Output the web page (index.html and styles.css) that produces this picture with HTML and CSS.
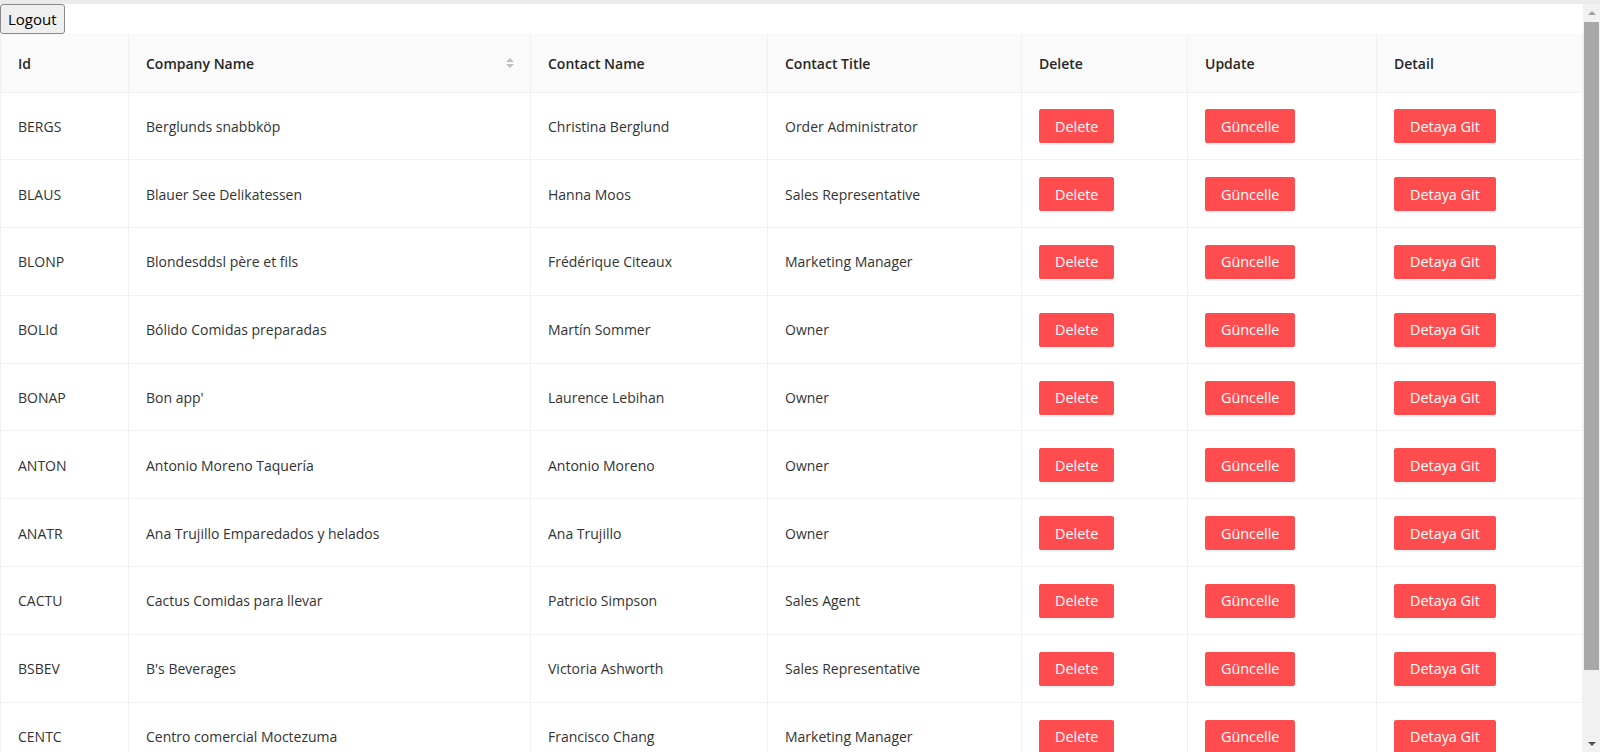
FILE: index.html
```html
<!DOCTYPE html>
<html>
<head>
<meta charset="utf-8">
<title>Customers</title>
<link rel="stylesheet" href="styles.css">
</head>
<body>
<div class="frame">
  <div class="viewport">
    <button class="logout">Logout</button>
    <table class="grid">
      <colgroup>
        <col class="c-id"><col class="c-company"><col class="c-contact"><col class="c-title"><col class="c-del"><col class="c-upd"><col class="c-det">
      </colgroup>
      <thead>
        <tr>
          <th>Id</th>
          <th><div class="sortable"><span>Company Name</span><span class="sorter"><i class="up"></i><i class="down"></i></span></div></th>
          <th>Contact Name</th>
          <th>Contact Title</th>
          <th>Delete</th>
          <th>Update</th>
          <th>Detail</th>
        </tr>
      </thead>
      <tbody>
        <tr><td>BERGS</td><td>Berglunds snabbköp</td><td>Christina Berglund</td><td>Order Administrator</td><td><button class="btn">Delete</button></td><td><button class="btn">Güncelle</button></td><td><button class="btn">Detaya Git</button></td></tr>
        <tr><td>BLAUS</td><td>Blauer See Delikatessen</td><td>Hanna Moos</td><td>Sales Representative</td><td><button class="btn">Delete</button></td><td><button class="btn">Güncelle</button></td><td><button class="btn">Detaya Git</button></td></tr>
        <tr><td>BLONP</td><td>Blondesddsl père et fils</td><td>Frédérique Citeaux</td><td>Marketing Manager</td><td><button class="btn">Delete</button></td><td><button class="btn">Güncelle</button></td><td><button class="btn">Detaya Git</button></td></tr>
        <tr><td>BOLId</td><td>Bólido Comidas preparadas</td><td>Martín Sommer</td><td>Owner</td><td><button class="btn">Delete</button></td><td><button class="btn">Güncelle</button></td><td><button class="btn">Detaya Git</button></td></tr>
        <tr><td>BONAP</td><td>Bon app'</td><td>Laurence Lebihan</td><td>Owner</td><td><button class="btn">Delete</button></td><td><button class="btn">Güncelle</button></td><td><button class="btn">Detaya Git</button></td></tr>
        <tr><td>ANTON</td><td>Antonio Moreno Taquería</td><td>Antonio Moreno</td><td>Owner</td><td><button class="btn">Delete</button></td><td><button class="btn">Güncelle</button></td><td><button class="btn">Detaya Git</button></td></tr>
        <tr><td>ANATR</td><td>Ana Trujillo Emparedados y helados</td><td>Ana Trujillo</td><td>Owner</td><td><button class="btn">Delete</button></td><td><button class="btn">Güncelle</button></td><td><button class="btn">Detaya Git</button></td></tr>
        <tr><td>CACTU</td><td>Cactus Comidas para llevar</td><td>Patricio Simpson</td><td>Sales Agent</td><td><button class="btn">Delete</button></td><td><button class="btn">Güncelle</button></td><td><button class="btn">Detaya Git</button></td></tr>
        <tr><td>BSBEV</td><td>B's Beverages</td><td>Victoria Ashworth</td><td>Sales Representative</td><td><button class="btn">Delete</button></td><td><button class="btn">Güncelle</button></td><td><button class="btn">Detaya Git</button></td></tr>
        <tr><td>CENTC</td><td>Centro comercial Moctezuma</td><td>Francisco Chang</td><td>Marketing Manager</td><td><button class="btn">Delete</button></td><td><button class="btn">Güncelle</button></td><td><button class="btn">Detaya Git</button></td></tr>
      </tbody>
    </table>
  </div>
  <div class="scrollbar">
    <div class="sb-btn"><i class="sb-up"></i></div>
    <div class="sb-track"><div class="sb-thumb"></div></div>
    <div class="sb-btn"><i class="sb-down"></i></div>
  </div>
</div>
</body>
</html>
```

FILE: styles.css
```css
html, body {
  margin: 0;
  padding: 0;
  background: #ffffff;
}

body {
  font-family: "Open Sans", "Noto Sans", "Liberation Sans", sans-serif;
  color: #262626;
  overflow: hidden;
}

.frame {
  display: flex;
  height: 748px;
  border-top: 4px solid #ebebeb;
}

.viewport {
  flex: 1;
  min-width: 0;
  overflow: hidden;
}

.logout {
  display: block;
  height: 30px;
  margin: 0;
  padding: 0 7px;
  font-family: inherit;
  font-size: 15px;
  color: #000;
  background: #efefef;
  border: 1px solid #8a8a8a;
  border-radius: 3px;
}

.grid {
  table-layout: fixed;
  width: 1582px;
  border-collapse: collapse;
  border-left: 1px solid #f0f0f0;
  font-size: 14px;
}

.c-id { width: 128px; }
.c-company { width: 402px; }
.c-contact { width: 237px; }
.c-title { width: 254px; }
.c-del { width: 166px; }
.c-upd { width: 189px; }
.c-det { width: 206px; }

.grid th,
.grid td {
  padding: 1px 17px 0 17px;
  text-align: left;
  border-right: 1px solid #f0f0f0;
  border-bottom: 1px solid #f0f0f0;
  white-space: nowrap;
}

.grid thead tr {
  height: 58px;
}

.grid th {
  background: #fafafa;
  font-weight: 600;
  color: #262626;
}

.grid tbody tr {
  height: 67.8px;
}

.grid td {
  color: #333333;
}

.sortable {
  display: flex;
  align-items: center;
  justify-content: space-between;
}

.sorter {
  display: flex;
  flex-direction: column;
  gap: 2px;
  margin-right: -1px;
}

.sorter .up {
  width: 0;
  height: 0;
  border-left: 4px solid transparent;
  border-right: 4px solid transparent;
  border-bottom: 4px solid #bfbfbf;
}

.sorter .down {
  width: 0;
  height: 0;
  border-left: 4px solid transparent;
  border-right: 4px solid transparent;
  border-top: 4px solid #bfbfbf;
}

.btn {
  height: 34px;
  padding: 0 15px;
  font-family: inherit;
  font-size: 14.4px;
  color: #ffffff;
  background: #ff4d4f;
  border: 1px solid #ff4d4f;
  border-radius: 2px;
  box-shadow: 0 2px 0 rgba(0, 0, 0, 0.045);
}

.scrollbar {
  width: 17px;
  flex: none;
  display: flex;
  flex-direction: column;
  background: #f1f1f1;
}

.sb-btn {
  height: 17px;
  flex: none;
  display: flex;
  align-items: center;
  justify-content: center;
}

.sb-up {
  width: 0;
  height: 0;
  border-left: 4px solid transparent;
  border-right: 4px solid transparent;
  border-bottom: 4px solid #a3a3a3;
}

.sb-down {
  width: 0;
  height: 0;
  border-left: 4px solid transparent;
  border-right: 4px solid transparent;
  border-top: 4px solid #505050;
}

.sb-track {
  flex: 1;
  padding: 1px 1px 0 1px;
}

.sb-thumb {
  height: 648px;
  background: #a8a8a8;
}
```
